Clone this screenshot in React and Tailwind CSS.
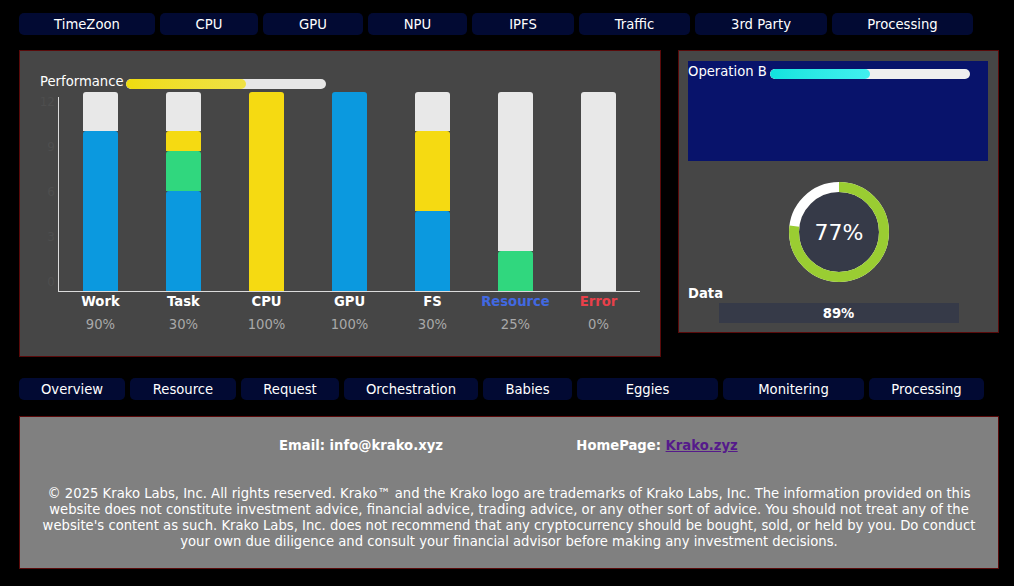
import React from "react";

const topNav = [
  ["TimeZoon", "w-[136px]"],
  ["CPU", "w-[98px]"],
  ["GPU", "w-[100px]"],
  ["NPU", "w-[99px]"],
  ["IPFS", "w-[102px]"],
  ["Traffic", "w-[111px]"],
  ["3rd Party", "w-[132px]"],
  ["Processing", "w-[141px]"],
];

const bottomNav = [
  ["Overview", "w-[106px]"],
  ["Resource", "w-[106px]"],
  ["Request", "w-[98px]"],
  ["Orchestration", "w-[134px]"],
  ["Babies", "w-[89px]"],
  ["Eggies", "w-[141px]"],
  ["Monitering", "w-[141px]"],
  ["Processing", "w-[115px]"],
];

const GRAY = "bg-[#e8e8e8]";
const BLUE = "bg-[#0b99df]";
const YEL = "bg-[#f5da12]";
const GRN = "bg-[#30d77e]";

// segments top -> bottom, heights in px (total 199)
const bars = [
  { name: "Work", pct: "90%", color: "text-white", segs: [[GRAY, 39], [BLUE, 160]] },
  { name: "Task", pct: "30%", color: "text-white", segs: [[GRAY, 39], [YEL, 20], [GRN, 40], [BLUE, 100]] },
  { name: "CPU", pct: "100%", color: "text-white", segs: [[YEL, 199]] },
  { name: "GPU", pct: "100%", color: "text-white", segs: [[BLUE, 199]] },
  { name: "FS", pct: "30%", color: "text-white", segs: [[GRAY, 39], [YEL, 80], [BLUE, 80]] },
  { name: "Resource", pct: "25%", color: "text-[#4169e1]", segs: [[GRAY, 159], [GRN, 40]] },
  { name: "Error", pct: "0%", color: "text-[#e8404a]", segs: [[GRAY, 199]] },
];

function NavBar({ items }) {
  return (
    <div className="flex gap-[5px] pl-[19px]">
      {items.map(([t, w]) => (
        <div
          key={t}
          className={`${w} h-[22px] rounded-[5px] bg-[#020a33] text-white text-[13.2px] leading-[24px] text-center whitespace-nowrap overflow-hidden`}
        >
          {t}
        </div>
      ))}
    </div>
  );
}

function Donut() {
  const r = 45;
  const c = 2 * Math.PI * r;
  const g = c * 0.77;
  return (
    <svg width="100" height="100" viewBox="0 0 100 100" className="block">
      <circle cx="50" cy="50" r="40" fill="#363a48" />
      <circle cx="50" cy="50" r={r} fill="none" stroke="#ffffff" strokeWidth="10" />
      <circle
        cx="50"
        cy="50"
        r={r}
        fill="none"
        stroke="#9acd32"
        strokeWidth="10"
        strokeDasharray={`${g} ${c}`}
        transform="rotate(-90 50 50)"
      />
      <text
        x="50"
        y="58"
        textAnchor="middle"
        fill="#ffffff"
        fontSize="22"
        fontFamily="Verdana, 'DejaVu Sans', sans-serif"
      >
        77%
      </text>
    </svg>
  );
}

export default function App() {
  return (
    <div className="w-[1014px] h-[586px] bg-black overflow-hidden font-['Verdana','DejaVu_Sans',sans-serif] text-[13.2px]">
      <div className="pt-[13px]">
        <NavBar items={topNav} />
      </div>

      <div className="flex mt-[15px] pl-[19px] gap-[17px] items-start">
        {/* Left performance panel */}
        <div className="w-[642px] h-[307px] bg-[#464646] border border-[#5a0a0a] pt-[22px]">
          <div className="flex items-start pl-[20px] h-[16px]">
            <span className="w-[86px] text-white leading-[18px] whitespace-nowrap">Performance</span>
            <div className="mt-[6px] w-[200px] h-[10px] rounded-full bg-[#e6e6e6] overflow-hidden">
              <div className="h-full w-[60%] rounded-full bg-gradient-to-r from-[#eedc0c] to-[#efe244]" />
            </div>
          </div>

          <div className="flex mt-[3px]">
            <div className="w-[35px] flex flex-col gap-[29px] pt-[2px] text-right text-[12px] leading-[16px] text-[#4e4e4e]">
              <span>12</span>
              <span>9</span>
              <span>6</span>
              <span>3</span>
              <span>0</span>
            </div>
            <div className="w-[3px]" />
            <div className="flex flex-col">
              <div className="flex h-[199px]">
                <div className="w-px mt-[5px] bg-[#dcdcdc]" />
                {bars.map((b) => (
                  <div key={b.name} className="w-[83px] flex justify-center items-end">
                    <div className="w-[35px] flex flex-col">
                      {b.segs.map(([col, h], i) => (
                        <div
                          key={i}
                          className={`${col} rounded-t-[3px]`}
                          style={{ height: h }}
                        />
                      ))}
                    </div>
                  </div>
                ))}
              </div>
              <div className="h-px w-[582px] bg-[#dcdcdc]" />
              <div className="flex pl-px mt-[2px]">
                {bars.map((b) => (
                  <div key={b.name} className="w-[83px] flex flex-col items-center">
                    <span className={`font-bold leading-[16px] ${b.color}`}>{b.name}</span>
                    <span className="mt-[7px] leading-[16px] text-[#a9a9a9]">{b.pct}</span>
                  </div>
                ))}
              </div>
            </div>
          </div>
        </div>

        {/* Right panel */}
        <div className="w-[321px] h-[283px] bg-[#464646] border border-[#5a0a0a] pt-[10px] flex flex-col">
          <div className="ml-[9px] w-[300px] h-[100px] bg-[#08136b] pt-[3px]">
            <div className="flex items-start">
              <span className="w-[82px] text-white leading-[16px] whitespace-nowrap">Operation B</span>
              <div className="mt-[5px] w-[200px] h-[10px] rounded-full bg-[#efefef] overflow-hidden">
                <div className="h-full w-1/2 rounded-full bg-gradient-to-r from-[#0fe3de] to-[#40f0ef]" />
              </div>
            </div>
          </div>
          <div className="mt-[21px] flex justify-center">
            <Donut />
          </div>
          <div className="ml-[9px] mt-[4px] text-white font-bold leading-[16px]">Data</div>
          <div className="mt-[1px] mx-auto w-[240px] h-[20px] bg-[#363a48] text-white font-bold text-center leading-[21px]">
            89%
          </div>
        </div>
      </div>

      <div className="mt-[21px]">
        <NavBar items={bottomNav} />
      </div>

      <div className="ml-[19px] mt-[16px] w-[980px] h-[153px] bg-[#808080] border border-[#5a0a0a] pt-[21px] text-white">
        <div className="flex justify-center font-bold leading-[16px]">
          <div className="w-[296px] text-center whitespace-nowrap">Email: info@krako.xyz</div>
          <div className="w-[296px] text-center whitespace-nowrap">
            HomePage: <a href="#" className="text-[#551a8b] underline">Krako.zyz</a>
          </div>
        </div>
        <p className="mt-[32px] text-center leading-[16px] whitespace-nowrap">
          © 2025 Krako Labs, Inc. All rights reserved. Krako™ and the Krako logo are trademarks of Krako Labs, Inc. The information provided on this
          <br />
          website does not constitute investment advice, financial advice, trading advice, or any other sort of advice. You should not treat any of the
          <br />
          website's content as such. Krako Labs, Inc. does not recommend that any cryptocurrency should be bought, sold, or held by you. Do conduct
          <br />
          your own due diligence and consult your financial advisor before making any investment decisions.
        </p>
      </div>
    </div>
  );
}
